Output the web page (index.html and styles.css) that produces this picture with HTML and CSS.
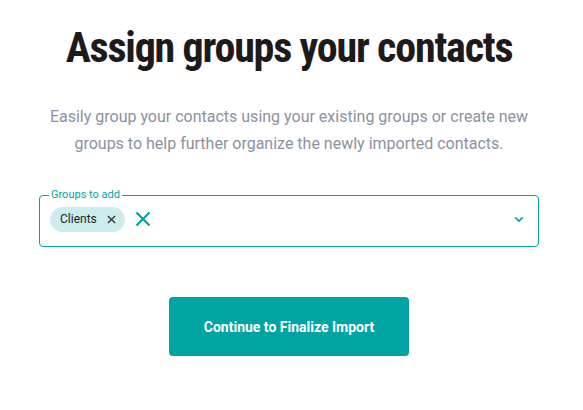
FILE: index.html
```html
<!DOCTYPE html>
<html lang="en">
<head>
<meta charset="utf-8">
<link rel="stylesheet" href="styles.css">
</head>
<body>
<main class="page">
  <h1 class="title">Assign groups your contacts</h1>
  <p class="lead">Easily group your contacts using your existing groups or create new groups to help further organize the newly imported contacts.</p>
  <fieldset class="field">
    <legend class="field-label">Groups to add</legend>
    <div class="field-row">
      <span class="chip">Clients
        <svg class="chip-x" viewBox="0 0 10 10" width="9" height="9"><path d="M1 1L9 9M9 1L1 9" stroke="#333" stroke-width="1.5" fill="none"/></svg>
      </span>
      <svg class="clear" viewBox="0 0 16 16" width="16" height="16"><path d="M1.5 1.5L14.5 14.5M14.5 1.5L1.5 14.5" stroke="#00a4a2" stroke-width="2.2" fill="none"/></svg>
      <span class="spacer"></span>
      <svg class="chev" viewBox="0 0 12 8" width="10" height="7"><path d="M1.5 1.5L6 6L10.5 1.5" stroke="#00a4a2" stroke-width="2" fill="none"/></svg>
    </div>
  </fieldset>
  <div class="actions">
    <button class="btn">Continue to Finalize Import</button>
  </div>
</main>
</body>
</html>
```
FILE: styles.css
```css
* { box-sizing: border-box; }
html, body { margin: 0; background: #fff; }
.page {
  width: 500px;
  margin: 0 0 0 39px;
  padding-top: 22px;
  display: flex;
  flex-direction: column;
  align-items: center;
}
.title {
  margin: 0;
  font-family: Roboto, sans-serif;
  font-stretch: condensed;
  font-weight: 700;
  font-size: 42px;
  line-height: 52px;
  color: #1e1a1b;
  letter-spacing: -1.2px;
  white-space: nowrap;
}
.lead {
  margin: 29px 0 0;
  width: 500px;
  text-align: center;
  font-family: Roboto, sans-serif;
  font-size: 16px;
  line-height: 27px;
  color: #8c91a1;
}
.field {
  align-self: stretch;
  margin: 32px 0 0;
  padding: 0 14px 0 10px;
  border: 1px solid #00a4a2;
  border-radius: 4px;
  height: 58px;
  min-width: 0;
}
.field-label {
  margin-left: -1px;
  padding: 0 2px;
  font-family: Roboto, sans-serif;
  font-size: 11px;
  line-height: 12px;
  color: #00a4a2;
}
.field-row {
  display: flex;
  align-items: center;
  height: 46px;
  margin-top: -5px;
}
.chip {
  display: inline-flex;
  align-items: center;
  gap: 10px;
  height: 25px;
  padding: 0 9px 0 10px;
  border-radius: 13px;
  background: #cdecee;
  font-family: Roboto, sans-serif;
  font-size: 12px;
  font-weight: 400;
  color: #232323;
}
.chip-x { display: block; }
.clear { margin-left: 10px; display: block; }
.spacer { flex: 1; }
.chev { display: block; }
.actions {
  margin-top: 50px;
}
.btn {
  width: 240px;
  height: 59px;
  border: 0;
  border-radius: 4px;
  background: #00a4a2;
  color: #fff;
  font-family: Roboto, sans-serif;
  font-weight: 700;
  font-size: 14px;
}
```
